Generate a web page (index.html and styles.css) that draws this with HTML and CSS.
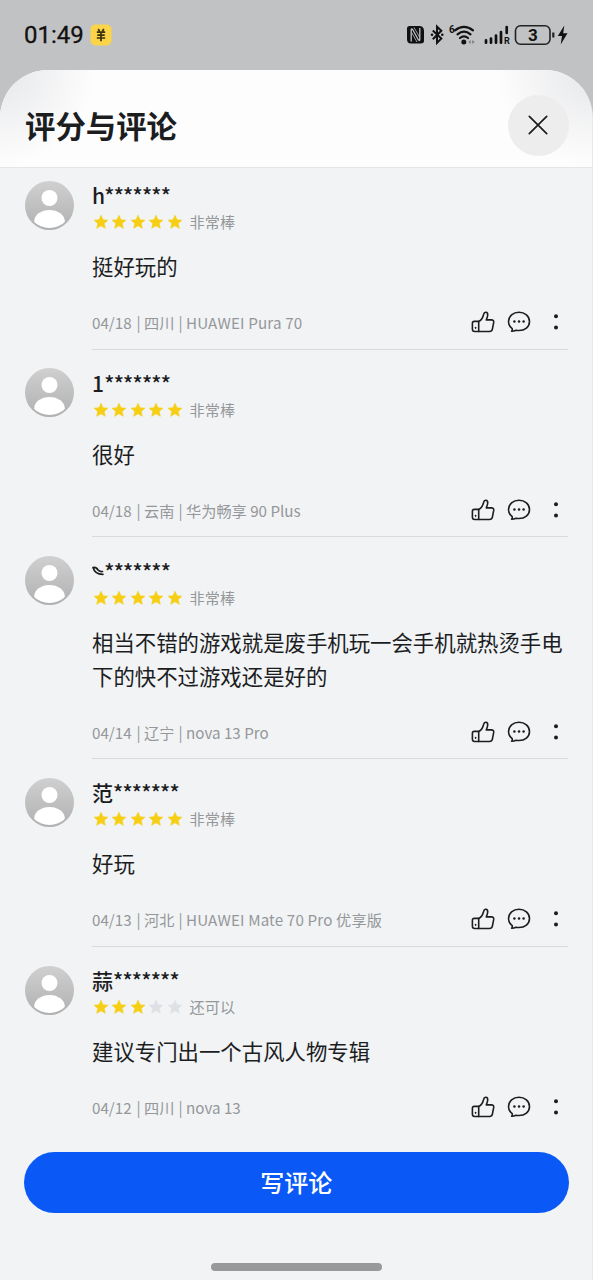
FILE: index.html
```html
<!DOCTYPE html>
<html lang="zh-CN">
<head>
<meta charset="utf-8">
<title>评分与评论</title>
<link rel="stylesheet" href="styles.css">
</head>
<body>
<svg class="defs" width="0" height="0" aria-hidden="true">
  <defs>
    <linearGradient id="avatar-bg" x1="0" y1="0" x2="0" y2="1"><stop offset="0" stop-color="#d0d0d0"/><stop offset="1" stop-color="#b0b0b0"/></linearGradient>
    <clipPath id="avatar-clip"><circle cx="24.5" cy="24.5" r="22.5"/></clipPath>
    <symbol id="avatar" viewBox="0 0 49 49">
      <circle cx="24.5" cy="24.5" r="24.5" fill="url(#avatar-bg)"/>
      <circle cx="24.5" cy="17" r="8" fill="#fff"/>
      <ellipse cx="24.5" cy="40.3" rx="15.3" ry="11.4" fill="#fff" clip-path="url(#avatar-clip)"/>
    </symbol>
    <symbol id="star" viewBox="0 0 16 16">
      <path d="M8 1.2 10 5.7 14.9 6.2 11.2 9.4 12.3 14.3 8 11.8 3.7 14.3 4.8 9.4 1.1 6.2 6 5.7Z" fill="currentColor" stroke="currentColor" stroke-width=".6" stroke-linejoin="round"/>
    </symbol>
    <symbol id="like" viewBox="0 0 24 24">
      <g fill="none" stroke="#1c1d1f" stroke-width="1.6" stroke-linejoin="round" stroke-linecap="round">
        <path d="M7.700 11.400H3.200Q1.400 11.400 1.400 13.200V19.300Q1.400 21.500 3.600 21.500H7.700Z"/>
        <path d="M7.700 11.400C10.300 10.500 11.800 7.500 12.600 4.500C13.200 1.300 16.900 1.700 16.700 5C16.600 6.800 16 8.300 15.300 9.900H20.400Q23 9.900 22.700 12.400L21.400 19.100Q20.900 21.500 18.500 21.500H7.700"/>
        <path d="M4.600 17.300V18.300" stroke-width="1.300"/>
      </g>
    </symbol>
    <symbol id="reply" viewBox="0 0 24 24">
      <path d="M5.200 18.700C2.900 16.900 1.500 14.500 1.500 11.600C1.500 6.100 6.200 2.200 12 2.200S22.500 6.100 22.500 11.600S17.800 20.500 12 20.500Q10.300 20.500 9 20.200Q7 21.200 4.600 21.300Q5.600 20 5.200 18.700Z" fill="none" stroke="#1c1d1f" stroke-width="1.600" stroke-linejoin="round"/>
      <g fill="#1c1d1f"><circle cx="7.400" cy="11.600" r="1.250"/><circle cx="12" cy="11.600" r="1.250"/><circle cx="16.600" cy="11.600" r="1.250"/></g>
    </symbol>
    <symbol id="more" viewBox="0 0 24 24">
      <g fill="#1c1d1f"><circle cx="12" cy="6.300" r="2"/><circle cx="12" cy="17.500" r="2"/></g>
    </symbol>
  </defs>
</svg>
<div class="screen">
  <div class="status">
    <span class="clock">01:49</span>
    <svg class="coin" viewBox="0 0 22 22"><rect x=".5" y=".5" width="21" height="21" rx="5" fill="#fbd447"/><path d="M8.200 5 9.600 7.200M13.800 5 12.400 7.200M6.800 8.200H15.200M7.300 11.200H14.700M6.800 14H15.200M11 8V17.300" fill="none" stroke="#39300f" stroke-width="1.700"/></svg>
    <svg class="indicators" viewBox="0 0 164 28">
      <path d="M3.500 4H13Q18 4 18 9V19Q18 21.500 14.500 21.500H5Q1 21.500 1 17V6.500Q1 4 3.500 4Z" fill="#111"/>
      <path d="M5.200 19.500V8.200Q5.200 5.800 6.800 7.800L12.300 17.700Q13.800 19.700 13.800 17V6" fill="none" stroke="#c2c3c4" stroke-width="1.300"/><path d="M8 5.500 13.500 15M5.700 10.500 11 20" fill="none" stroke="#c2c3c4" stroke-width=".8"/>
      <path d="M26.800 8.600 35.300 16.600 31 20.800V4.700L35.300 8.800 26.800 17.200" fill="none" stroke="#111" stroke-width="2"/>
      <circle cx="26" cy="12.800" r="1.300" fill="#111"/><circle cx="36.300" cy="12.800" r="1.300" fill="#111"/>
      <text x="43" y="11" class="tiny">6</text>
      <g fill="none" stroke="#111" stroke-width="2.200" stroke-linecap="round"><path d="M49 8.300Q58 1.300 67 8.300"/><path d="M51.500 12.300Q58 7 64.500 12.300"/><path d="M54 16Q58 12.800 62 16"/></g>
      <circle cx="57.800" cy="20" r="2.500" fill="#111"/><path d="M62.500 20 64.600 18V22ZM68.600 20 66.300 18V22Z" fill="#777"/>
      <g stroke="#111" stroke-width="2.700" stroke-linecap="round"><path d="M80 18.300V20.700M85 16.500V20.700M90 13.500V20.700M95 10V20.700M100.700 5V11"/></g>
      <text x="98" y="22" class="roaming">R</text>
      <rect x="109.500" y="3.800" width="34.500" height="18.400" rx="5" fill="none" stroke="#222" stroke-width="1.600"/>
      <text x="126.800" y="18.800" class="battery-text">3</text>
      <path d="M147.300 10.500V15.500" stroke="#222" stroke-width="2.200"/>
      <path d="M158.300 3.500 151.800 14H156L154.700 22.500 161.500 11.200H157.200Z" fill="#111"/>
    </svg>
  </div>
  <main class="sheet">
    <header class="header">
      <h1 class="title">评分与评论</h1>
      <button class="close" aria-label="关闭"><svg viewBox="0 0 20 20"><path d="M1.300 1.300 18.700 18.700M18.700 1.300 1.300 18.700" fill="none" stroke="#1c1c1c" stroke-width="1.700" stroke-linecap="round"/></svg></button>
    </header>
    <section class="reviews">
      <article class="review">
        <svg class="avatar"><use href="#avatar"/></svg>
        <div class="body">
          <div class="name"><span class="initial latin">h</span><span class="mask">*******</span></div>
          <div class="rating"><span class="stars"><svg><use href="#star"/></svg><svg><use href="#star"/></svg><svg><use href="#star"/></svg><svg><use href="#star"/></svg><svg><use href="#star"/></svg></span><span class="label">非常棒</span></div>
          <p class="comment">挺好玩的</p>
          <div class="foot"><span class="date">04/18</span><span class="sep">|</span><span class="place">四川</span><span class="sep">|</span><span class="device">HUAWEI Pura 70</span><span class="actions"><svg><use href="#like"/></svg><svg><use href="#reply"/></svg><svg><use href="#more"/></svg></span></div>
        </div>
      </article>
      <article class="review">
        <svg class="avatar"><use href="#avatar"/></svg>
        <div class="body">
          <div class="name"><span class="initial latin">1</span><span class="mask">*******</span></div>
          <div class="rating"><span class="stars"><svg><use href="#star"/></svg><svg><use href="#star"/></svg><svg><use href="#star"/></svg><svg><use href="#star"/></svg><svg><use href="#star"/></svg></span><span class="label">非常棒</span></div>
          <p class="comment">很好</p>
          <div class="foot"><span class="date">04/18</span><span class="sep">|</span><span class="place">云南</span><span class="sep">|</span><span class="device plain">华为畅享 90 Plus</span><span class="actions"><svg><use href="#like"/></svg><svg><use href="#reply"/></svg><svg><use href="#more"/></svg></span></div>
        </div>
      </article>
      <article class="review">
        <svg class="avatar"><use href="#avatar"/></svg>
        <div class="body">
          <div class="name"><span class="initial latin"><svg class="mark" viewBox="0 0 13 10"><path d="M1 1.500Q3 8.500 11 8.300M1 1.500Q4.500 1 5.800 3.800Q7.500 6 10.500 5.500" fill="none" stroke="#1c1d1f" stroke-width="1.700" stroke-linecap="round"/></svg></span><span class="mask">*******</span></div>
          <div class="rating"><span class="stars"><svg><use href="#star"/></svg><svg><use href="#star"/></svg><svg><use href="#star"/></svg><svg><use href="#star"/></svg><svg><use href="#star"/></svg></span><span class="label">非常棒</span></div>
          <p class="comment">相当不错的游戏就是废手机玩一会手机就热烫手电下的快不过游戏还是好的</p>
          <div class="foot"><span class="date">04/14</span><span class="sep">|</span><span class="place">辽宁</span><span class="sep">|</span><span class="device plain">nova 13 Pro</span><span class="actions"><svg><use href="#like"/></svg><svg><use href="#reply"/></svg><svg><use href="#more"/></svg></span></div>
        </div>
      </article>
      <article class="review">
        <svg class="avatar"><use href="#avatar"/></svg>
        <div class="body">
          <div class="name"><span class="initial">范</span><span class="mask">*******</span></div>
          <div class="rating"><span class="stars"><svg><use href="#star"/></svg><svg><use href="#star"/></svg><svg><use href="#star"/></svg><svg><use href="#star"/></svg><svg><use href="#star"/></svg></span><span class="label">非常棒</span></div>
          <p class="comment">好玩</p>
          <div class="foot"><span class="date">04/13</span><span class="sep">|</span><span class="place">河北</span><span class="sep">|</span><span class="device">HUAWEI Mate 70 Pro 优享版</span><span class="actions"><svg><use href="#like"/></svg><svg><use href="#reply"/></svg><svg><use href="#more"/></svg></span></div>
        </div>
      </article>
      <article class="review">
        <svg class="avatar"><use href="#avatar"/></svg>
        <div class="body">
          <div class="name"><span class="initial">蒜</span><span class="mask">*******</span></div>
          <div class="rating"><span class="stars"><svg><use href="#star"/></svg><svg><use href="#star"/></svg><svg><use href="#star"/></svg><svg class="off"><use href="#star"/></svg><svg class="off"><use href="#star"/></svg></span><span class="label">还可以</span></div>
          <p class="comment">建议专门出一个古风人物专辑</p>
          <div class="foot"><span class="date">04/12</span><span class="sep">|</span><span class="place">四川</span><span class="sep">|</span><span class="device plain">nova 13</span><span class="actions"><svg><use href="#like"/></svg><svg><use href="#reply"/></svg><svg><use href="#more"/></svg></span></div>
        </div>
      </article>
    </section>
    <footer class="bottom">
      <button class="write">写评论</button>
      <div class="handle"></div>
    </footer>
  </main>
</div>
</body>
</html>
```
FILE: styles.css
```css
* { box-sizing: border-box; }
body { margin: 0; background: #c2c3c4; font-family: "Noto Sans CJK SC", sans-serif; color: #1c1d1f; }
.defs { position: absolute; }
.screen { width: 593px; height: 1280px; display: flex; flex-direction: column; overflow: hidden; background: #c1c2c4; }
.status { height: 70px; flex: none; display: flex; align-items: center; padding: 0 23px 0 24px; }
.clock { font: 400 24px/28px Roboto, sans-serif; width: 66px; color: #111; -webkit-text-stroke: 0.3px #111; }
.coin { width: 22px; height: 22px; }
.indicators { width: 164px; height: 28px; margin: 2px 0 0 auto; }
.tiny { font: 700 10px Roboto, sans-serif; fill: #111; }
.roaming { font: 700 9px Roboto, sans-serif; fill: #111; }
.battery-text { font: 700 17px Roboto, sans-serif; fill: #111; text-anchor: middle; }
.sheet { flex: 1; min-height: 0; display: flex; flex-direction: column; background: #f1f3f5; border-radius: 48px 48px 0 0; overflow: hidden; border-right: 1px solid #e7e8ea; }
.header { height: 98px; flex: none; display: flex; align-items: center; justify-content: space-between; padding: 13px 23.5px 0 25px; border-bottom: 1px solid #e3e5e9;
  background: radial-gradient(circle at 0 0, #e6e7e8 0, rgba(253,253,254,0) 95px), radial-gradient(circle at 100% 0, #e6e7e8 0, rgba(253,253,254,0) 95px), #fdfdfe; }
.title { margin: 0; font-size: 30.4px; line-height: 40px; font-weight: 700; white-space: nowrap; padding-bottom: 1px; }
.close { width: 61px; height: 61px; border: 0; border-radius: 50%; background: #ededee; display: grid; place-items: center; padding: 0; }
.close svg { width: 20px; height: 20px; }
.reviews { flex: none; display: flex; flex-direction: column; gap: 18.75px; padding: 12.5px 24px 0 24.5px; }
.review { display: flex; gap: 18.5px; }
.avatar { width: 49px; height: 49px; flex: none; }
.body { flex: 1; min-width: 0; padding-top: 1.5px; padding-bottom: 12.5px; border-bottom: 1px solid #d9dbde; }
.review:last-child .body { border-color: transparent; }
.name { height: 26px; display: flex; align-items: center; font-size: 21px; line-height: 26px; font-weight: 500; }
.initial { width: 21px; flex: none; }
.initial.latin { width: 12.3px; display: flex; align-items: center; height: 26px; }
.mark { width: 13px; height: 10px; flex: none; }
.mask { font: 500 21px/26px "Noto Sans CJK SC", sans-serif; letter-spacing: -0.75px; }
.rating { height: 20px; margin-top: 4px; display: flex; align-items: center; gap: 7px; font-size: 15.2px; line-height: 20px; color: #95979a; }
.label { padding-bottom: 2px; }
.stars { display: flex; gap: 2.4px; padding-left: 1px; color: #f6cf14; }
.stars svg { width: 16px; height: 16px; }
.stars .off { color: #dfe0e4; }
.comment { margin: 17px 0 25px; font-size: 21.4px; line-height: 34px; white-space: normal; }
.foot { height: 28px; display: flex; align-items: center; font-size: 15.2px; line-height: 28px; color: #95979a; white-space: nowrap; }
.date { width: 41px; }
.sep { width: 11px; text-align: center; }
.place { width: 31px; }
.device { letter-spacing: 0.15px; }
.device.plain { letter-spacing: 0; }
.actions { margin-left: auto; display: flex; gap: 12.7px; }
.actions svg { width: 24px; height: 24px; }
.bottom { margin-top: auto; height: 128.5px; flex: none; display: flex; flex-direction: column; align-items: center; padding: 0 23.5px 0 24px; }
.write { width: 100%; height: 61px; border: 0; border-radius: 31px; background: #0a59f7; color: #fff; font: 500 24px/34px "Noto Sans CJK SC", sans-serif; padding: 0; }
.handle { width: 171px; height: 8px; border-radius: 4px; background: #98999b; margin-top: 50.5px; }
```
